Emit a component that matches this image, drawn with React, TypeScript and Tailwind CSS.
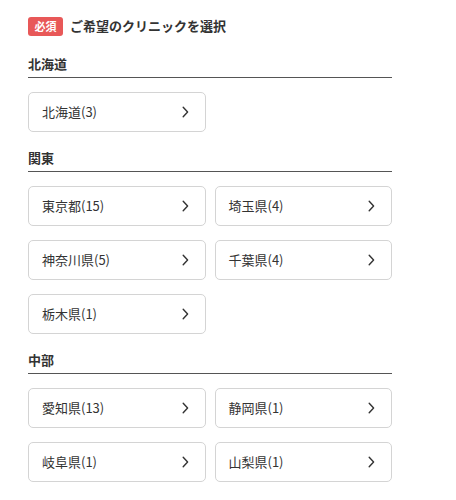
import React from "react";

type Region = { name: string; items: string[] };

const regions: Region[] = [
  { name: "北海道", items: ["北海道(3)"] },
  { name: "関東", items: ["東京都(15)", "埼玉県(4)", "神奈川県(5)", "千葉県(4)", "栃木県(1)"] },
  { name: "中部", items: ["愛知県(13)", "静岡県(1)", "岐阜県(1)", "山梨県(1)"] },
];

const Chevron = () => (
  <svg width="7" height="12" viewBox="0 0 7 12" fill="none" className="shrink-0">
    <path d="M1.2 1.2L5.6 6L1.2 10.8" stroke="#333" strokeWidth="1.4" strokeLinecap="round" strokeLinejoin="round" />
  </svg>
);

export default function App() {
  return (
    <div
      className="bg-white min-h-[500px] px-7 pt-4 text-[#333]"
      style={{ fontFamily: '"Noto Sans CJK JP", "Noto Sans", sans-serif' }}
    >
      <div className="w-[364px]">
        <div className="flex items-center gap-[7px] h-5">
          <span className="bg-[#e85858] text-white text-[11px] font-bold rounded-[3px] h-[19px] w-[35px] flex items-center justify-center leading-none">
            必須
          </span>
          <span className="text-[13px] font-bold leading-5">ご希望のクリニックを選択</span>
        </div>

        {regions.map((r, i) => (
          <section key={r.name} className={i === 0 ? "mt-[19px]" : "mt-[17px]"}>
            <h2 className="text-[13px] font-bold leading-[18px] pb-[4px] border-b border-[#555]">{r.name}</h2>
            <div className="grid grid-cols-2 gap-x-[9px] gap-y-[14px] mt-[14px]">
              {r.items.map((it) => (
                <button
                  key={it}
                  className="h-10 flex items-center justify-between pl-[13px] pr-[16px] border border-[#d4d4d4] rounded-[5px] bg-white text-[13px] text-[#333] text-left"
                >
                  <span>{it}</span>
                  <Chevron />
                </button>
              ))}
            </div>
          </section>
        ))}
      </div>
    </div>
  );
}
